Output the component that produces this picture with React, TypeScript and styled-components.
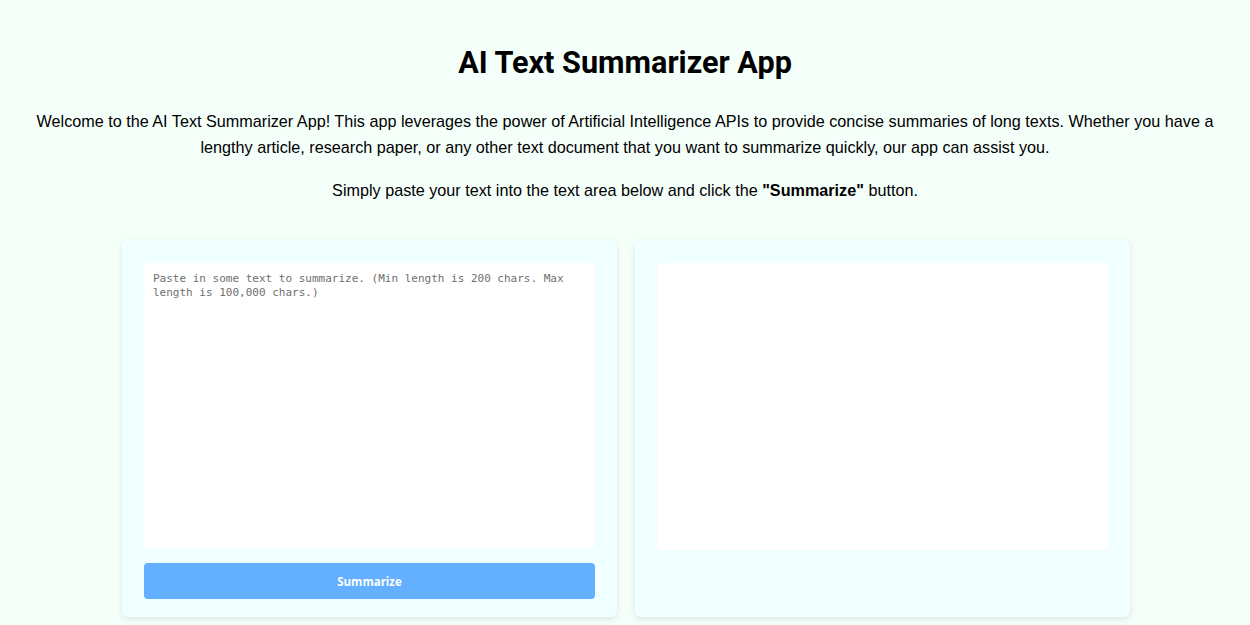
import React, { useState } from 'react';
import styled, { createGlobalStyle } from 'styled-components';

const GlobalStyle = createGlobalStyle`
  html, body {
    margin: 0;
    padding: 0;
    background-color: #f5fffa;
  }
  body {
    font-family: "Liberation Sans", Arial, sans-serif;
    color: #000;
  }
`;

const App = () => {
  const [text, setText] = useState('');

  return (
    <>
      <GlobalStyle />
      <Page>
        <Title>AI Text Summarizer App</Title>
        <Intro>
          Welcome to the AI Text Summarizer App! This app leverages the power of Artificial Intelligence APIs to provide
          concise summaries of long texts. Whether you have a lengthy article, research paper, or any other text document
          that you want to summarize quickly, our app can assist you.
        </Intro>
        <Hint>
          Simply paste your text into the text area below and click the <strong>"Summarize"</strong> button.
        </Hint>
        <Panels>
          <Card>
            <TextInput
              value={text}
              onChange={(e) => setText(e.target.value)}
              placeholder="Paste in some text to summarize. (Min length is 200 chars. Max length is 100,000 chars.)"
            />
            <SubmitButton disabled={text.length < 200}>Summarize</SubmitButton>
          </Card>
          <Card>
            <Output />
          </Card>
        </Panels>
      </Page>
    </>
  );
};

const Page = styled.div`
  display: flex;
  flex-direction: column;
  align-items: center;
  padding: 45px 20px 8px;
`;
const Title = styled.h1`
  font-family: Roboto, "Liberation Sans", sans-serif;
  font-weight: 700;
  font-size: 30.6px;
  line-height: 36px;
  margin: 0 0 27px;
`;
const Intro = styled.p`
  font-size: 16.2px;
  line-height: 26px;
  text-align: center;
  margin: 0;
`;
const Hint = styled(Intro)`
  margin-top: 17px;
`;
const Panels = styled.div`
  display: grid;
  grid-template-columns: 495px 495px;
  gap: 18px;
  margin: 37px 0 0 2px;
`;
const Card = styled.div`
  display: flex;
  flex-direction: column;
  gap: 14px;
  height: 377px;
  box-sizing: border-box;
  padding: 23px 22px 18px;
  background-color: #f0ffff;
  border-radius: 6px;
  box-shadow: 0 2px 6px rgba(0, 0, 0, 0.1);
`;
const TextInput = styled.textarea`
  height: 287px;
  box-sizing: border-box;
  resize: none;
  border: none;
  outline: none;
  border-radius: 5px;
  background: #fff;
  padding: 9px 9px;
  font-family: "DejaVu Sans Mono", monospace;
  font-size: 11px;
  line-height: 14px;
  color: #333;
  &::placeholder {
    color: #6f6f6f;
  }
`;
const SubmitButton = styled.button`
  height: 36px;
  border: none;
  border-radius: 4px;
  background-color: #62b0ff;
  color: #fff;
  font-family: "Open Sans", sans-serif;
  font-weight: 700;
  font-size: 11.5px;
  cursor: pointer;
  &:disabled {
    cursor: not-allowed;
  }
`;
const Output = styled.div`
  height: 287px;
  border-radius: 5px;
  background: #fff;
`;

export default App;
